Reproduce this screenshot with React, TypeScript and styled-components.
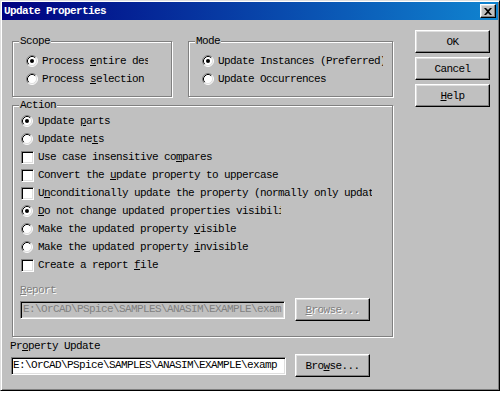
import React from "react";
import styled, { createGlobalStyle } from "styled-components";

const Global = createGlobalStyle`
  html, body { margin: 0; padding: 0; background: #ffffff; }
  body {
    font-family: "Liberation Mono", "DejaVu Sans Mono", monospace;
    font-size: 11px;
    letter-spacing: -0.6px;
    color: #000;
  }
  * { box-sizing: border-box; }
`;

const Window = styled.div`
  width: 500px;
  height: 391px;
  background: #c0c0c0;
  border: 1px solid;
  border-color: #dfdfdf #000 #000 #dfdfdf;
  box-shadow: inset 1px 1px #fff, inset -1px -1px #808080;
  padding: 1px;
  display: flex;
  flex-direction: column;
`;

const TitleBar = styled.div`
  height: 18px;
  flex: none;
  display: flex;
  align-items: center;
  justify-content: space-between;
  padding: 0 2px;
  background: linear-gradient(90deg, #000080 0%, #1084d0 100%);
  color: #fff;
  font-weight: bold;
  line-height: 12px;
`;

const CloseButton = styled.div`
  width: 16px;
  height: 14px;
  background: #c0c0c0;
  border: 1px solid;
  border-color: #fff #000 #000 #fff;
  box-shadow: inset -1px -1px #808080, inset 1px 1px #dfdfdf;
  display: flex;
  align-items: center;
  justify-content: center;
`;

const Body = styled.div`
  display: flex;
  padding: 10px 0 0 10px;
`;

const LeftCol = styled.div`
  width: 382px;
  padding-top: 11px;
  display: flex;
  flex-direction: column;
`;

const RightCol = styled.div`
  width: 75px;
  margin-left: 21px;
  display: flex;
  flex-direction: column;
  gap: 4px;
`;

const TopRow = styled.div`
  display: flex;
  gap: 16px;
`;

const Group = styled.div<{ $w: number; $h: number; $pt: number; $pl: number; $mt?: number }>`
  position: relative;
  width: ${(p) => p.$w}px;
  height: ${(p) => p.$h}px;
  margin-top: ${(p) => p.$mt ?? 0}px;
  border: 1px solid #808080;
  box-shadow: inset 1px 1px #fff, 1px 1px #fff;
  padding: ${(p) => p.$pt}px 0 0 ${(p) => p.$pl}px;
  display: flex;
  flex-direction: column;
`;

const Legend = styled.span`
  position: absolute;
  top: -7px;
  left: 6px;
  padding: 0 1px;
  background: #c0c0c0;
  line-height: 12px;
`;

const Row = styled.div<{ $gap: number }>`
  display: flex;
  align-items: center;
  height: 18px;
  gap: ${(p) => p.$gap}px;
  line-height: 12px;
`;

const Text = styled.span<{ $w?: number }>`
  white-space: nowrap;
  ${(p) => (p.$w ? `width: ${p.$w}px; overflow: hidden;` : "")}
`;

const U = styled.span`
  text-decoration: underline;
`;

const Check = styled.span`
  width: 13px;
  height: 13px;
  flex: none;
  background: #fff;
  border: 1px solid;
  border-color: #808080 #fff #fff #808080;
  box-shadow: inset 1px 1px #000, inset -1px -1px #dfdfdf;
`;

const RadioBox = styled.span`
  width: 13px;
  height: 12px;
  flex: none;
  display: flex;
`;

const Caption = styled.div<{ $w: number; $ml: number; $mt: number; $disabled?: boolean }>`
  width: ${(p) => p.$w}px;
  height: 13px;
  margin: ${(p) => p.$mt}px 0 0 ${(p) => p.$ml}px;
  overflow: hidden;
  line-height: 12px;
  color: ${(p) => (p.$disabled ? "#808080" : "#000")};
  text-shadow: ${(p) => (p.$disabled ? "1px 1px #fff" : "none")};
`;

const FieldRow = styled.div<{ $ml: number; $gap: number; $mt: number }>`
  display: flex;
  align-items: center;
  margin: ${(p) => p.$mt}px 0 0 ${(p) => p.$ml}px;
  gap: ${(p) => p.$gap}px;
`;

const Field = styled.div<{ $w: number; $disabled?: boolean }>`
  width: ${(p) => p.$w}px;
  height: 18px;
  background: ${(p) => (p.$disabled ? "#c0c0c0" : "#fff")};
  color: ${(p) => (p.$disabled ? "#808080" : "#000")};
  border: 1px solid;
  border-color: #808080 #fff #fff #808080;
  box-shadow: inset 1px 1px #000, inset -1px -1px #dfdfdf;
  padding: 0 1px 0 ${(p) => (p.$disabled ? 2 : 1)}px;
  white-space: nowrap;
  overflow: hidden;
  line-height: 15px;
`;

const Button = styled.div<{ $disabled?: boolean }>`
  width: 75px;
  height: 23px;
  flex: none;
  background: #c0c0c0;
  border: 1px solid;
  border-color: #fff #000 #000 #fff;
  box-shadow: inset -1px -1px #808080, inset 1px 1px #dfdfdf;
  display: flex;
  align-items: center;
  justify-content: center;
  line-height: 12px;
  color: ${(p) => (p.$disabled ? "#808080" : "#000")};
  text-shadow: ${(p) => (p.$disabled ? "1px 1px #fff" : "none")};
`;

const Radio = ({ checked }: { checked?: boolean }) => (
  <RadioBox>
    <svg width="12" height="12" viewBox="0 0 12 12">
      <circle cx="6" cy="6" r="5" fill="#fff" />
      <path d="M9.89 2.11 A5.5 5.5 0 0 0 2.11 9.89" stroke="#808080" fill="none" />
      <path d="M2.11 9.89 A5.5 5.5 0 0 0 9.89 2.11" stroke="#fff" fill="none" />
      <path d="M9.18 2.82 A4.5 4.5 0 0 0 2.82 9.18" stroke="#000" fill="none" />
      <path d="M2.82 9.18 A4.5 4.5 0 0 0 9.18 2.82" stroke="#dfdfdf" fill="none" />
      {checked && <circle cx="6" cy="6" r="2" fill="#000" />}
    </svg>
  </RadioBox>
);

const RadioRow = ({ checked, children, w, gap = 4 }: { checked?: boolean; children: React.ReactNode; w?: number; gap?: number }) => (
  <Row $gap={gap}>
    <Radio checked={checked} />
    <Text $w={w}>{children}</Text>
  </Row>
);

const CheckRow = ({ children, w }: { children: React.ReactNode; w?: number }) => (
  <Row $gap={4}>
    <Check />
    <Text $w={w}>{children}</Text>
  </Row>
);

export default function App() {
  return (
    <>
      <Global />
      <Window>
        <TitleBar>
          <span>Update Properties</span>
          <CloseButton>
            <svg width="8" height="7" viewBox="0 0 8 7">
              <path d="M0 0h2l2 2 2-2h2L5 3.5 8 7H6L4 5 2 7H0l3-3.5z" fill="#000" />
            </svg>
          </CloseButton>
        </TitleBar>
        <Body>
          <LeftCol>
            <TopRow>
              <Group $w={160} $h={56} $pt={10} $pl={13}>
                <Legend>Scope</Legend>
                <RadioRow checked w={106} gap={3}>
                  Process <U>e</U>ntire design
                </RadioRow>
                <RadioRow gap={3}>
                  Process <U>s</U>election
                </RadioRow>
              </Group>
              <Group $w={205} $h={56} $pt={10} $pl={13}>
                <Legend>Mode</Legend>
                <RadioRow checked w={165} gap={3}>
                  Update Instances (Preferred)
                </RadioRow>
                <RadioRow gap={3}>Update Occurrences</RadioRow>
              </Group>
            </TopRow>
            <Group $w={381} $h={232} $pt={6} $pl={8} $mt={8}>
              <Legend>Action</Legend>
              <RadioRow checked>
                Update <U>p</U>arts
              </RadioRow>
              <RadioRow>
                Update ne<U>t</U>s
              </RadioRow>
              <CheckRow>
                Use case insensitive co<U>m</U>pares
              </CheckRow>
              <CheckRow>
                Convert the <U>u</U>pdate property to uppercase
              </CheckRow>
              <CheckRow w={334}>
                U<U>n</U>conditionally update the property (normally only update empty values)
              </CheckRow>
              <RadioRow checked w={243}>
                <U>D</U>o not change updated properties visibility
              </RadioRow>
              <RadioRow>
                Make the updated property <U>v</U>isible
              </RadioRow>
              <RadioRow>
                Make the updated property <U>i</U>nvisible
              </RadioRow>
              <CheckRow>
                Create a report <U>f</U>ile
              </CheckRow>
              <Caption $w={42} $ml={-1} $mt={10} $disabled>
                <U>R</U>eport File
              </Caption>
              <FieldRow $ml={-1} $gap={10} $mt={1}>
                <Field $w={265} $disabled>
                  E:\OrCAD\PSpice\SAMPLES\ANASIM\EXAMPLE\exam
                </Field>
                <Button $disabled>
                  <span>
                    <U>B</U>rowse...
                  </span>
                </Button>
              </FieldRow>
            </Group>
            <Caption $w={100} $ml={-2} $mt={3}>
              Pr<U>o</U>perty Update File
            </Caption>
            <FieldRow $ml={-1} $gap={9} $mt={1}>
              <Field $w={275}>E:\OrCAD\PSpice\SAMPLES\ANASIM\EXAMPLE\examp</Field>
              <Button>
                <span>
                  Bro<U>w</U>se...
                </span>
              </Button>
            </FieldRow>
          </LeftCol>
          <RightCol>
            <Button>OK</Button>
            <Button>Cancel</Button>
            <Button>
              <span>
                <U>H</U>elp
              </span>
            </Button>
          </RightCol>
        </Body>
      </Window>
    </>
  );
}
